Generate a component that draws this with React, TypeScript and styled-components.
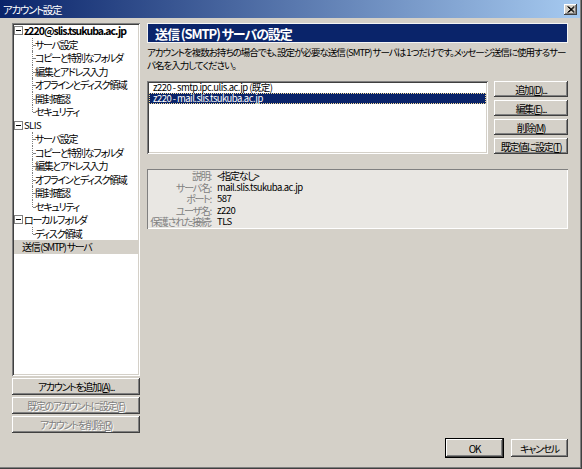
import { Fragment } from 'react';
import styled, { createGlobalStyle, css } from 'styled-components';

const GlobalStyle = createGlobalStyle`
  html, body {
    margin: 0;
    padding: 0;
    background: #d4d0c8;
  }
  * {
    box-sizing: border-box;
  }
`;

const uiFont = css`
  font-family: 'Noto Sans CJK JP', 'Noto Sans', sans-serif;
  font-feature-settings: 'palt';
  font-size: 9.5px;
  letter-spacing: -0.55px;
`;

// Japanese text is squeezed to get close to the narrow MS UI Gothic kana
const ja = css`
  font-size: 10px;
  letter-spacing: -1.3px;
`;

const raised = css`
  background: #d4d0c8;
  box-shadow:
    inset -1px -1px #404040,
    inset 1px 1px #ffffff,
    inset -2px -2px #808080;
`;

const sunken = css`
  box-shadow:
    inset 1px 1px #808080,
    inset -1px -1px #ffffff,
    inset 2px 2px #404040,
    inset -2px -2px #d4d0c8;
`;

const Window = styled.div`
  ${uiFont};
  width: 582px;
  height: 469px;
  display: flex;
  flex-direction: column;
  background: #d4d0c8;
  color: #000;
  border-right: 1px solid #404040;
  border-bottom: 1px solid #404040;
  box-shadow: inset -1px -1px #808080;
`;

const TitleBar = styled.div`
  height: 18px;
  display: flex;
  align-items: center;
  justify-content: space-between;
  padding: 0 3px 0 3px;
  margin-right: 1px;
  background: linear-gradient(to right, #0a246a, #a6caf0);
`;

const Title = styled.span`
  color: #fff;
  font-size: 10.5px;
  letter-spacing: -1.3px;
`;

const CloseButton = styled.div`
  ${raised};
  width: 13px;
  height: 11px;
  display: flex;
  align-items: center;
  justify-content: center;
`;

const Body = styled.div`
  display: flex;
  gap: 7px;
  padding: 5px 0 0 12px;
`;

const LeftColumn = styled.div`
  width: 128px;
  display: flex;
  flex-direction: column;
  gap: 2px;
`;

const Tree = styled.div`
  ${sunken};
  background: #fff;
  height: 353px;
  padding: 1px 2px;
`;

const TreeRow = styled.div<{ $level: number; $selected?: boolean; $last?: boolean }>`
  position: relative;
  height: 13.5px;
  line-height: 13.5px;
  white-space: nowrap;
  display: flex;
  align-items: center;
  padding-left: ${(p) => (p.$level === 0 ? 0 : 21)}px;
  background: ${(p) => (p.$selected ? '#d4d0c8' : 'transparent')};

  ${(p) =>
    p.$level === 1 &&
    css`
      &::before {
        content: '';
        position: absolute;
        left: 18px;
        top: 0;
        height: ${p.$last ? '7px' : '13.5px'};
        border-left: 1px dotted #808080;
      }
      &::after {
        content: '';
        position: absolute;
        left: 19px;
        top: 7px;
        width: 2px;
        border-top: 1px dotted #808080;
      }
    `}
`;

const Twisty = styled.span`
  width: 9px;
  height: 9px;
  margin-right: 1px;
  border: 1px solid #808080;
  background: #fff;
  display: flex;
  align-items: center;
  justify-content: center;
  flex-shrink: 0;

  &::after {
    content: '';
    width: 5px;
    height: 1px;
    background: #000;
  }
`;

const NodeLabel = styled.span<{ $bold?: boolean; $indent?: boolean; $ja?: boolean }>`
  font-weight: ${(p) => (p.$bold ? 700 : 400)};
  padding-left: ${(p) => (p.$indent ? 8 : 0)}px;
  ${(p) => p.$ja && ja};
  ${(p) =>
    p.$bold &&
    css`
      font-size: 10.5px;
      letter-spacing: -1px;
    `}
`;

const Button = styled.div<{ $disabled?: boolean; $default?: boolean }>`
  ${raised};
  ${ja};
  display: flex;
  align-items: center;
  justify-content: center;
  white-space: nowrap;
  color: ${(p) => (p.$disabled ? '#808080' : '#000')};
  text-shadow: ${(p) => (p.$disabled ? '1px 1px #ffffff' : 'none')};
  ${(p) =>
    p.$default &&
    css`
      outline: 1px solid #000;
    `}

  u {
    text-underline-offset: 1px;
  }
`;

const SideButton = styled(Button)`
  height: 17px;
`;

const RightColumn = styled.div`
  width: 421px;
  display: flex;
  flex-direction: column;
`;

const Banner = styled.div`
  height: 20px;
  display: flex;
  align-items: center;
  padding-left: 7px;
  background: #0a246a;
  border: 1px solid #f4f4f4;
  color: #fff;
  font-size: 13px;
  font-weight: 700;
  letter-spacing: -1.1px;
`;

const Description = styled.p`
  margin: 3px 0 0 0;
  font-size: 9.5px;
  line-height: 12.5px;
  letter-spacing: -1px;
  white-space: nowrap;
`;

const ListArea = styled.div`
  display: flex;
  gap: 6px;
  margin-top: 10px;
`;

const ServerList = styled.div`
  ${sunken};
  background: #fff;
  flex: 1;
  height: 73px;
  padding: 1px 2px;
`;

const ServerItem = styled.div<{ $selected?: boolean }>`
  height: 11px;
  line-height: 11px;
  padding-left: 4px;
  white-space: nowrap;
  background: ${(p) => (p.$selected ? '#0a246a' : 'transparent')};
  color: ${(p) => (p.$selected ? '#fff' : '#000')};
  outline: ${(p) => (p.$selected ? '1px dotted #f5db95' : 'none')};
  outline-offset: -1px;
`;

const ListButtons = styled.div`
  width: 74px;
  display: flex;
  flex-direction: column;
  gap: 3px;
`;

const ListButton = styled(Button)`
  height: 16px;
`;

const Details = styled.div`
  margin-top: 15px;
  height: 60px;
  padding: 1px 0;
  background: #e9e7e3;
  box-shadow:
    inset 1px 1px #808080,
    inset -1px -1px #ffffff;
  display: grid;
  grid-template-columns: 64px 1fr;
  grid-auto-rows: 11.5px;
  column-gap: 6px;
  line-height: 11.5px;
`;

const DetailLabel = styled.span`
  ${ja};
  text-align: right;
  color: #808080;
  white-space: nowrap;
`;

const DetailValue = styled.span<{ $ja?: boolean }>`
  white-space: nowrap;
  ${(p) => p.$ja && ja};
`;

const Footer = styled.div`
  display: flex;
  justify-content: flex-end;
  gap: 8px;
  padding: 6px 13px 0 0;
`;

const DialogButton = styled(Button)`
  width: 57px;
  height: 18px;
`;

type TreeNode = {
  label: string;
  level: 0 | 1;
  expandable?: boolean;
  bold?: boolean;
  last?: boolean;
  selected?: boolean;
};

const accountChildren = [
  'サーバ設定',
  'コピーと特別なフォルダ',
  '編集とアドレス入力',
  'オフラインとディスク領域',
  '開封確認',
  'セキュリティ',
];

const children = (items: string[]): TreeNode[] =>
  items.map((label, i) => ({ label, level: 1, last: i === items.length - 1 }));

const treeNodes: TreeNode[] = [
  { label: 'z220@slis.tsukuba.ac.jp', level: 0, expandable: true, bold: true },
  ...children(accountChildren),
  { label: 'SLIS', level: 0, expandable: true },
  ...children(accountChildren),
  { label: 'ローカルフォルダ', level: 0, expandable: true },
  ...children(['ディスク領域']),
  { label: '送信 (SMTP) サーバ', level: 0, selected: true },
];

const details: [string, string][] = [
  ['説明:', '<指定なし>'],
  ['サーバ名:', 'mail.slis.tsukuba.ac.jp'],
  ['ポート:', '587'],
  ['ユーザ名:', 'z220'],
  ['保護された接続:', 'TLS'],
];

const hasJapanese = (s: string) => /[^\x00-\x7f]/.test(s);

function Mnemonic({ text, letter, tail = '' }: { text: string; letter: string; tail?: string }) {
  return (
    <span>
      {text}(<u>{letter}</u>){tail}
    </span>
  );
}

export default function App() {
  return (
    <>
      <GlobalStyle />
      <Window>
        <TitleBar>
          <Title>アカウント設定</Title>
          <CloseButton>
            <svg width="8" height="7" viewBox="0 0 8 7">
              <path d="M0.5 0.5 L7 6.5 M1.5 0.5 L7.5 6 M7 0.5 L0.5 6.5 M7.5 1 L1.5 6.5" stroke="#000" strokeWidth="1" />
            </svg>
          </CloseButton>
        </TitleBar>

        <Body>
          <LeftColumn>
            <Tree>
              {treeNodes.map((node, i) => (
                <TreeRow key={i} $level={node.level} $selected={node.selected} $last={node.last}>
                  {node.expandable && <Twisty />}
                  <NodeLabel
                    $bold={node.bold}
                    $ja={hasJapanese(node.label)}
                    $indent={node.level === 0 && !node.expandable}
                  >
                    {node.label}
                  </NodeLabel>
                </TreeRow>
              ))}
            </Tree>
            <SideButton>
              <Mnemonic text="アカウントを追加" letter="A" tail="..." />
            </SideButton>
            <SideButton $disabled>
              <Mnemonic text="既定のアカウントに設定" letter="F" />
            </SideButton>
            <SideButton $disabled>
              <Mnemonic text="アカウントを削除" letter="R" />
            </SideButton>
          </LeftColumn>

          <RightColumn>
            <Banner>送信 (SMTP) サーバの設定</Banner>
            <Description>
              アカウントを複数お持ちの場合でも、設定が必要な送信 (SMTP) サーバは 1つだけです。メッセージ送信に使用するサー
              <br />
              バ名を入力してください。
            </Description>

            <ListArea>
              <ServerList>
                <ServerItem>z220 - smtp.ipc.ulis.ac.jp (既定)</ServerItem>
                <ServerItem $selected>z220 - mail.slis.tsukuba.ac.jp</ServerItem>
              </ServerList>
              <ListButtons>
                <ListButton>
                  <Mnemonic text="追加" letter="D" tail="..." />
                </ListButton>
                <ListButton>
                  <Mnemonic text="編集" letter="E" tail="..." />
                </ListButton>
                <ListButton>
                  <Mnemonic text="削除" letter="M" />
                </ListButton>
                <ListButton>
                  <Mnemonic text="既定値に設定" letter="T" />
                </ListButton>
              </ListButtons>
            </ListArea>

            <Details>
              {details.map(([label, value]) => (
                <Fragment key={label}>
                  <DetailLabel>{label}</DetailLabel>
                  <DetailValue $ja={hasJapanese(value)}>{value}</DetailValue>
                </Fragment>
              ))}
            </Details>
          </RightColumn>
        </Body>

        <Footer>
          <DialogButton $default>OK</DialogButton>
          <DialogButton>キャンセル</DialogButton>
        </Footer>
      </Window>
    </>
  );
}
